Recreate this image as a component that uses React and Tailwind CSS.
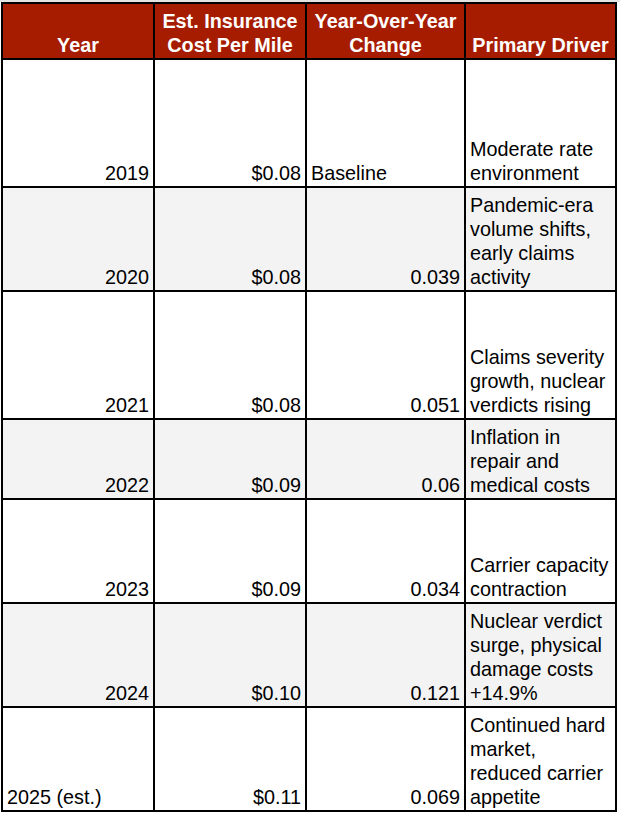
import React from 'react';

const rows = [
  { year: '2019', cost: '$0.08', change: 'Baseline', driver: ['Moderate rate', 'environment'], h: 'h-[126px]' },
  { year: '2020', cost: '$0.08', change: '0.039', driver: ['Pandemic-era', 'volume shifts,', 'early claims', 'activity'], h: 'h-[102px]' },
  { year: '2021', cost: '$0.08', change: '0.051', driver: ['Claims severity', 'growth, nuclear', 'verdicts rising'], h: 'h-[126px]' },
  { year: '2022', cost: '$0.09', change: '0.06', driver: ['Inflation in', 'repair and', 'medical costs'], h: 'h-[78px]' },
  { year: '2023', cost: '$0.09', change: '0.034', driver: ['Carrier capacity', 'contraction'], h: 'h-[102px]' },
  { year: '2024', cost: '$0.10', change: '0.121', driver: ['Nuclear verdict', 'surge, physical', 'damage costs', '+14.9%'], h: 'h-[102px]' },
  { year: '2025 (est.)', cost: '$0.11', change: '0.069', driver: ['Continued hard', 'market,', 'reduced carrier', 'appetite'], h: 'h-[102px]' },
];

// numbers sit on the right, plain text on the left, like a sheet does
const isNumber = (v) => /^[\d$.]+$/.test(v);

const Cell = ({ children, bg, h, right }) => (
  <div className={`${bg} ${h} flex items-end px-[4px] pb-[1px] ${right ? 'justify-end text-right' : 'justify-start text-left'}`}>
    <div>{children}</div>
  </div>
);

const HeadCell = ({ lines }) => (
  <div className="bg-[#a61c00] h-[54px] flex items-end justify-center px-[2px] pb-[1px] text-center font-bold text-white">
    <div>
      {lines.map((l) => (
        <div key={l} className="whitespace-nowrap">{l}</div>
      ))}
    </div>
  </div>
);

const App = () => {
  return (
    <div
      className="w-[620px] h-[814px] bg-white text-black text-[19.8px] leading-[24px] border-t-2 border-[#e3e3e3]"
      style={{ fontFamily: '"Liberation Sans", Arial, sans-serif' }}
    >
      <div className="ml-[1px] w-[616px] grid grid-cols-[150px_150px_157px_149px] gap-[2px] p-[2px] bg-black">
        <HeadCell lines={['Year']} />
        <HeadCell lines={['Est. Insurance', 'Cost Per Mile']} />
        <HeadCell lines={['Year-Over-Year', 'Change']} />
        <HeadCell lines={['Primary Driver']} />
        {rows.map((r, i) => {
          const bg = i % 2 === 1 ? 'bg-[#f3f3f3]' : 'bg-white';
          return (
            <React.Fragment key={r.year}>
              <Cell bg={bg} h={r.h} right={isNumber(r.year)}>{r.year}</Cell>
              <Cell bg={bg} h={r.h} right>{r.cost}</Cell>
              <Cell bg={bg} h={r.h} right={isNumber(r.change)}>{r.change}</Cell>
              <Cell bg={bg} h={r.h}>
                {r.driver.map((l) => (
                  <div key={l} className="whitespace-nowrap">{l}</div>
                ))}
              </Cell>
            </React.Fragment>
          );
        })}
      </div>
    </div>
  );
};

export default App;
